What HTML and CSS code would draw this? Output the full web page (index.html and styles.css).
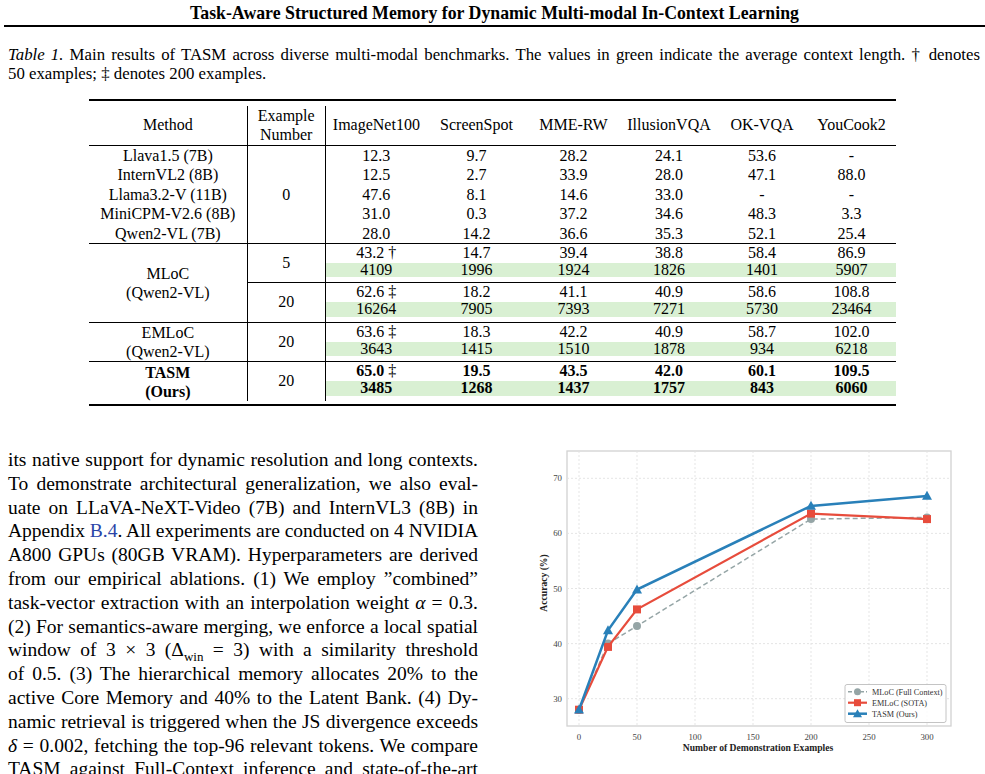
FILE: index.html
```html
<!DOCTYPE html>
<html lang="en">
<head>
  <meta charset="UTF-8" />
  <meta name="viewport" content="width=device-width, initial-scale=1.0"/>
  <title>TASM - Table 1</title>
  <link rel="stylesheet" href="styles.css">
</head>
<body>
  <header class="running-head">Task-Aware Structured Memory for Dynamic Multi-modal In-Context Learning</header>

  <p class="caption">
    <span class="ln"><em>Table 1.</em> Main results of TASM across diverse multi-modal benchmarks. The values in green indicate the average context length. † denotes</span>
    <span class="ln last">50 examples; ‡ denotes 200 examples.</span>
  </p>

  <div class="table-wrap">
    <table class="results">
      <colgroup>
        <col class="c-method"><col class="c-num"><col class="c-inet"><col class="c-ss"><col class="c-mme"><col class="c-ill"><col class="c-ok"><col class="c-yc">
      </colgroup>
      <thead>
        <tr>
          <th class="vr">Method</th>
          <th class="vr">Example<br>Number</th>
          <th>ImageNet100</th>
          <th>ScreenSpot</th>
          <th>MME-RW</th>
          <th>IllusionVQA</th>
          <th>OK-VQA</th>
          <th>YouCook2</th>
        </tr>
      </thead>
      <tbody class="zero">
        <tr class="rule"><td class="vr">Llava1.5 (7B)</td><td class="vr" rowspan="5">0</td><td>12.3</td><td>9.7</td><td>28.2</td><td>24.1</td><td>53.6</td><td>-</td></tr>
        <tr><td class="vr">InternVL2 (8B)</td><td>12.5</td><td>2.7</td><td>33.9</td><td>28.0</td><td>47.1</td><td>88.0</td></tr>
        <tr><td class="vr">Llama3.2-V (11B)</td><td>47.6</td><td>8.1</td><td>14.6</td><td>33.0</td><td>-</td><td>-</td></tr>
        <tr><td class="vr">MiniCPM-V2.6 (8B)</td><td>31.0</td><td>0.3</td><td>37.2</td><td>34.6</td><td>48.3</td><td>3.3</td></tr>
        <tr><td class="vr">Qwen2-VL (7B)</td><td>28.0</td><td>14.2</td><td>36.6</td><td>35.3</td><td>52.1</td><td>25.4</td></tr>
      </tbody>
      <tbody>
        <tr class="rule"><td class="vr method" rowspan="4">MLoC<br>(Qwen2-VL)</td><td class="vr" rowspan="2">5</td><td>43.2 †</td><td>14.7</td><td>39.4</td><td>38.8</td><td>58.4</td><td>86.9</td></tr>
        <tr class="ctx"><td>4109</td><td>1996</td><td>1924</td><td>1826</td><td>1401</td><td>5907</td></tr>
        <tr class="rule"><td class="vr" rowspan="2">20</td><td>62.6 ‡</td><td>18.2</td><td>41.1</td><td>40.9</td><td>58.6</td><td>108.8</td></tr>
        <tr class="ctx"><td>16264</td><td>7905</td><td>7393</td><td>7271</td><td>5730</td><td>23464</td></tr>
      </tbody>
      <tbody>
        <tr class="rule"><td class="vr method" rowspan="2">EMLoC<br>(Qwen2-VL)</td><td class="vr" rowspan="2">20</td><td>63.6 ‡</td><td>18.3</td><td>42.2</td><td>40.9</td><td>58.7</td><td>102.0</td></tr>
        <tr class="ctx"><td>3643</td><td>1415</td><td>1510</td><td>1878</td><td>934</td><td>6218</td></tr>
      </tbody>
      <tbody class="best">
        <tr class="rule"><td class="vr method" rowspan="2">TASM<br>(Ours)</td><td class="vr plain" rowspan="2">20</td><td>65.0 <span class="mark">‡</span></td><td>19.5</td><td>43.5</td><td>42.0</td><td>60.1</td><td>109.5</td></tr>
        <tr class="ctx"><td>3485</td><td>1268</td><td>1437</td><td>1757</td><td>843</td><td>6060</td></tr>
      </tbody>
    </table>
  </div>

  <div class="lower">
    <p class="text-col">
      <span class="ln">its native support for dynamic resolution and long contexts.</span>
      <span class="ln">To demonstrate architectural generalization, we also eval-</span>
      <span class="ln">uate on LLaVA-NeXT-Video (7B) and InternVL3 (8B) in</span>
      <span class="ln">Appendix <a class="ref" href="#">B.4</a>. All experiments are conducted on 4 NVIDIA</span>
      <span class="ln">A800 GPUs (80GB VRAM). Hyperparameters are derived</span>
      <span class="ln">from our empirical ablations. (1) We employ ”combined”</span>
      <span class="ln">task-vector extraction with an interpolation weight <i>α</i> = 0.3.</span>
      <span class="ln">(2) For semantics-aware merging, we enforce a local spatial</span>
      <span class="ln">window of 3 × 3 (Δ<sub>win</sub> = 3) with a similarity threshold</span>
      <span class="ln">of 0.5. (3) The hierarchical memory allocates 20% to the</span>
      <span class="ln">active Core Memory and 40% to the Latent Bank. (4) Dy-</span>
      <span class="ln">namic retrieval is triggered when the JS divergence exceeds</span>
      <span class="ln"><i>δ</i> = 0.002, fetching the top-96 relevant tokens. We compare</span>
      <span class="ln">TASM against Full-Context inference and state-of-the-art</span>
    </p>

    <figure class="chart">
      <svg width="460" height="327" viewBox="520 447 460 327">
        <rect x="567" y="451" width="384" height="275" fill="#fff" stroke="#d2d2d2" stroke-width="1.3"/>
        <g stroke="#e2e2e2" stroke-width="0.9" stroke-dasharray="2 2">
          <line x1="579" y1="451" x2="579" y2="726"/>
          <line x1="637" y1="451" x2="637" y2="726"/>
          <line x1="695" y1="451" x2="695" y2="726"/>
          <line x1="753" y1="451" x2="753" y2="726"/>
          <line x1="811" y1="451" x2="811" y2="726"/>
          <line x1="869" y1="451" x2="869" y2="726"/>
          <line x1="927" y1="451" x2="927" y2="726"/>
          <line x1="567" y1="698.7" x2="951" y2="698.7"/>
          <line x1="567" y1="643.6" x2="951" y2="643.6"/>
          <line x1="567" y1="588.5" x2="951" y2="588.5"/>
          <line x1="567" y1="533.4" x2="951" y2="533.4"/>
          <line x1="567" y1="478.3" x2="951" y2="478.3"/>
        </g>

        <g class="tick" text-anchor="middle">
          <text x="579" y="739.5">0</text>
          <text x="637" y="739.5">50</text>
          <text x="695" y="739.5">100</text>
          <text x="753" y="739.5">150</text>
          <text x="811" y="739.5">200</text>
          <text x="869" y="739.5">250</text>
          <text x="927" y="739.5">300</text>
        </g>
        <g class="tick" text-anchor="end">
          <text x="562" y="701.7">30</text>
          <text x="562" y="646.6">40</text>
          <text x="562" y="591.5">50</text>
          <text x="562" y="536.4">60</text>
          <text x="562" y="481.3">70</text>
        </g>
        <text class="axis-label" x="758" y="750.5" text-anchor="middle">Number of Demonstration Examples</text>
        <text class="axis-label" transform="translate(546.5 583) rotate(-90)" text-anchor="middle">Accuracy (%)</text>

        <!-- MLoC (full context) -->
        <polyline points="579,709.7 608,643.6 637,626 811,519.1 927,517.4" fill="none" stroke="#95a5a6" stroke-width="1.5" stroke-dasharray="5 3"/>
        <g fill="#95a5a6">
          <circle cx="579" cy="709.7" r="4"/>
          <circle cx="608" cy="643.6" r="4"/>
          <circle cx="637" cy="626" r="4"/>
          <circle cx="811" cy="519.1" r="4"/>
          <circle cx="927" cy="517.4" r="4"/>
        </g>

        <!-- EMLoC -->
        <polyline points="579,709.7 608,646.9 637,609.4 811,513.6 927,519.1" fill="none" stroke="#e74c3c" stroke-width="2.2"/>
        <g fill="#e74c3c">
          <rect x="575" y="705.7" width="8" height="8"/>
          <rect x="604" y="642.9" width="8" height="8"/>
          <rect x="633" y="605.4" width="8" height="8"/>
          <rect x="807" y="509.6" width="8" height="8"/>
          <rect x="923" y="515.1" width="8" height="8"/>
        </g>

        <!-- TASM -->
        <polyline points="579,709.7 608,630.4 637,589.6 811,505.9 927,495.9" fill="none" stroke="#2980b9" stroke-width="2.5"/>
        <g fill="#2980b9">
          <polygon points="579,704.5 574,713.5 584,713.5"/>
          <polygon points="608,625.2 603,634.2 613,634.2"/>
          <polygon points="637,584.4 632,593.4 642,593.4"/>
          <polygon points="811,500.7 806,509.7 816,509.7"/>
          <polygon points="927,490.7 922,499.7 932,499.7"/>
        </g>

        <!-- legend -->
        <rect x="845" y="684.5" width="101" height="38" rx="2" fill="#fff" fill-opacity="0.85" stroke="#b5b5b5" stroke-width="0.8"/>
        <line x1="848" y1="691.7" x2="867" y2="691.7" stroke="#95a5a6" stroke-width="1.5" stroke-dasharray="4 2"/>
        <circle cx="857.5" cy="691.7" r="3.5" fill="#95a5a6"/>
        <line x1="848" y1="702.7" x2="867" y2="702.7" stroke="#e74c3c" stroke-width="2.2"/>
        <rect x="854" y="699.2" width="7" height="7" fill="#e74c3c"/>
        <line x1="848" y1="713.7" x2="867" y2="713.7" stroke="#2980b9" stroke-width="2.5"/>
        <polygon points="857.5,709.2 853,717.2 862,717.2" fill="#2980b9"/>
        <g class="legend-text">
          <text x="872" y="694.6">MLoC (Full Context)</text>
          <text x="872" y="705.6">EMLoC (SOTA)</text>
          <text x="872" y="716.6">TASM (Ours)</text>
        </g>
      </svg>
    </figure>
  </div>
</body>
</html>
```

FILE: styles.css
```css
html, body {
  overflow: hidden;
}

body {
  margin: 0;
  background: #fff;
  color: #000;
  font-family: "Liberation Serif", "Times New Roman", serif;
}

.running-head {
  margin: 0 0 0 4px;
  height: 25px;
  line-height: 26px;
  font-size: 17.8px;
  font-weight: bold;
  text-align: center;
  border-bottom: 2px solid #000;
}

.caption {
  margin: 19px 5px 0 8px;
  font-size: 16.8px;
  line-height: 18.5px;
  word-spacing: -0.8px;
}

.caption .ln {
  display: block;
  text-align: justify;
  text-align-last: justify;
}

.caption .ln.last {
  text-align-last: left;
  word-spacing: 0;
}

/* table */
.table-wrap {
  width: 807px;
  margin: 16px 0 0 89px;
  padding: 4.5px 0 3px;
  border-top: 2px solid #000;
  border-bottom: 2px solid #000;
}

.results {
  width: 807px;
  table-layout: fixed;
  border-collapse: separate;
  border-spacing: 0;
  font-size: 16px;
}

.c-method { width: 158.7px; }
.c-num { width: 78px; }
.c-inet { width: 101.3px; }
.c-ss { width: 99px; }
.c-mme { width: 95px; }
.c-ill { width: 96px; }
.c-ok { width: 90px; }
.c-yc { width: 89px; }

.results th,
.results td {
  padding: 0;
  text-align: center;
  vertical-align: middle;
  font-weight: normal;
  white-space: nowrap;
  line-height: 18.5px;
}

.results th {
  line-height: 19.6px;
}

.results .vr {
  border-right: 1px solid #000;
}

.results tr.rule > td {
  border-top: 1px solid #000;
}

.results .zero td {
  line-height: 19.45px;
}

.results td.method {
  line-height: 19px;
}

.results tr.ctx td {
  line-height: 14.5px;
  padding: 0.5px 0 5px;
  background: #d9f0d3;
  background-clip: content-box;
}

.best td {
  font-weight: bold;
}

.best td.plain,
.best .mark {
  font-weight: normal;
}

/* text + figure */
.lower {
  display: flex;
  gap: 42px;
  margin-top: 42px;
  padding-left: 8px;
}

.text-col {
  width: 470px;
  margin: 0;
  font-size: 19.5px;
  line-height: 23.8px;
  word-spacing: -1.2px;
}

.text-col .ln {
  display: block;
  text-align: justify;
  text-align-last: justify;
}

.text-col sub {
  font-size: 13px;
  line-height: 0;
}

.ref {
  color: #2a45a8;
  text-decoration: none;
}

.chart {
  margin: -1px 0 0;
}

.chart svg {
  display: block;
}

.tick text {
  font-size: 8.8px;
  fill: #444;
}

.axis-label {
  font-size: 9.6px;
  font-weight: bold;
  fill: #222;
}

.legend-text text {
  font-size: 8.2px;
  fill: #333;
}
```
